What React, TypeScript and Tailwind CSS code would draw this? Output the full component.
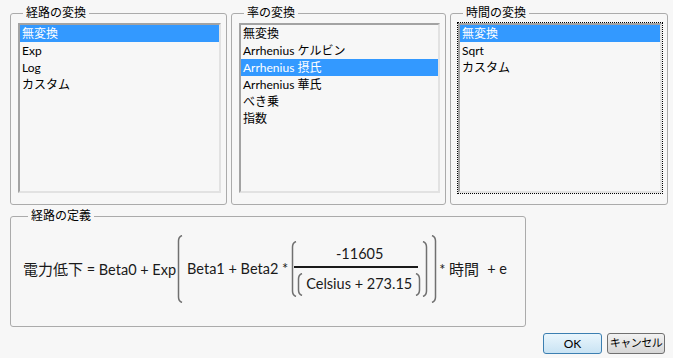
import React from 'react'

function Paren({ h, right = false }: { h: number; right?: boolean }) {
  const d = right
    ? `M1 0.5 Q4.5 2 4.5 6 V${h - 6} Q4.5 ${h - 2} 1 ${h - 0.5}`
    : `M5 0.5 Q1.5 2 1.5 6 V${h - 6} Q1.5 ${h - 2} 5 ${h - 0.5}`
  return (
    <svg width="6" height={h} viewBox={`0 0 6 ${h}`} className="shrink-0">
      <path d={d} stroke="#707070" strokeWidth="1.5" fill="none" />
    </svg>
  )
}

function ListGroup({
  title,
  items,
  selected,
  width,
  focused = false,
}: {
  title: string
  items: string[]
  selected: number
  width: string
  focused?: boolean
}) {
  return (
    <fieldset className={`${width} rounded-[3px] border border-[#ababab] pl-[7px] pr-[5px] pt-[2px] pb-[11px]`}>
      <legend className="ml-[5px] px-[3px] text-[12px] leading-[16px] text-black">{title}</legend>
      <div
        className={`h-[170px] bg-[#f7f7f7] border-2 border-t-[#a3a3a3] border-l-[#a3a3a3] border-b-[#e2e2e2] border-r-[#e2e2e2] ${
          focused ? 'outline-1 outline-dotted outline-black outline-offset-0' : ''
        }`}
      >
        {items.map((it, i) => (
          <div
            key={it}
            className={`h-[17px] pl-[2px] text-[12px] leading-[17px] whitespace-nowrap ${
              i === selected ? 'bg-[#3399ff] text-white' : 'text-black'
            }`}
          >
            {it}
          </div>
        ))}
      </div>
    </fieldset>
  )
}

export default function App() {
  return (
    <div className="w-[673px] h-[358px] bg-[#f7f7f7] pl-[10px] pt-[5px] font-['Lato','Noto_Sans_CJK_JP',sans-serif] overflow-hidden">
      <div className="flex gap-[4px]">
        <ListGroup title="経路の変換" items={['無変換', 'Exp', 'Log', 'カスタム']} selected={0} width="w-[217px]" />
        <ListGroup
          title="率の変換"
          items={['無変換', 'Arrhenius ケルビン', 'Arrhenius 摂氏', 'Arrhenius 華氏', 'べき乗', '指数']}
          selected={2}
          width="w-[215px]"
        />
        <ListGroup title="時間の変換" items={['無変換', 'Sqrt', 'カスタム']} selected={0} width="w-[218px]" focused />
      </div>

      <fieldset className="mt-[3px] w-[516px] h-[119px] rounded-[3px] border border-[#ababab] pl-[12px] pt-[11px]">
        <legend className="ml-[5px] px-[3px] text-[12px] leading-[16px] text-black">経路の定義</legend>
        <div className="flex items-center h-[68px] text-[14.5px] text-[#1a1a1a] whitespace-nowrap">
          <span>
            <span className="text-[15px]">電力低下</span> = Beta0 + Exp
          </span>
          <span className="ml-[1px]">
            <Paren h={68} />
          </span>
          <span className="ml-[4px]">Beta1 + Beta2 *</span>
          <span className="ml-[3px]">
            <Paren h={56} />
          </span>
          <div className="flex flex-col items-stretch -ml-[3px]">
            <div className="text-center h-[24px] leading-[24px] pl-[4px]">-11605</div>
            <div className="h-[1.5px] bg-[#1a1a1a] w-[124px]" />
            <div className="flex items-center mt-[5px] pl-[3px]">
              <Paren h={23} />
              <span className="mx-[3px]">Celsius + 273.15</span>
              <Paren h={23} right />
            </div>
          </div>
          <span className="ml-[1px]">
            <Paren h={56} right />
          </span>
          <span className="ml-[3px]">
            <Paren h={68} right />
          </span>
          <span className="ml-[2px]">
            * <span className="text-[15px]">時間</span>
          </span>
          <span className="ml-[8px]">+ e</span>
        </div>
      </fieldset>

      <div className="flex justify-end gap-[5px] mt-[6px] pr-[8px]">
        <button className="w-[59px] h-[21px] px-0 rounded-[3px] border border-[#3c7fb1] bg-gradient-to-b from-[#eaf6fd] to-[#c9e3f3] text-[12px] text-black">
          OK
        </button>
        <button className="w-[58px] h-[21px] px-0 rounded-[3px] border border-[#707070] bg-gradient-to-b from-[#f2f2f2] to-[#d6d6d6] text-[11px] tracking-[-0.5px] text-black whitespace-nowrap">
          キャンセル
        </button>
      </div>
    </div>
  )
}
